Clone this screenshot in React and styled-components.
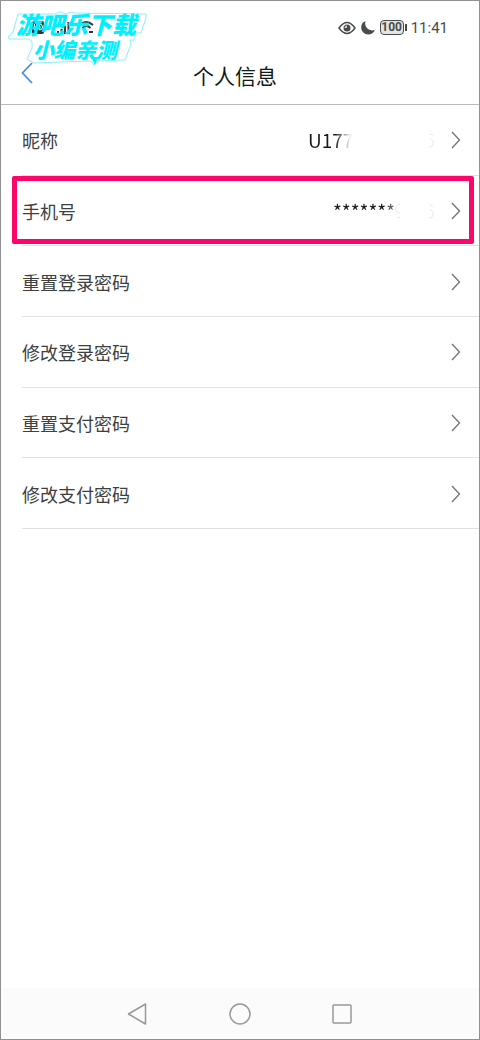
import React from 'react'
import { createGlobalStyle, styled } from 'styled-components'

const rows = [
  { label: '昵称', value: 'U177' },
  { label: '手机号', value: '*******', marked: true },
  { label: '重置登录密码' },
  { label: '修改登录密码' },
  { label: '重置支付密码' },
  { label: '修改支付密码' },
]

export default function App() {
  return (
    <Screen>
      <GlobalStyle />
      <StatusBar>
        <Network viewBox="0 0 64 18" aria-hidden="true">
          <rect x="1" y="2" width="12" height="13" rx="2" fill="#333" />
          <path d="M3.5 5v6M6 5v6M3.5 8h2.500M8.500 5v6q3 0 3-3t-3-3" stroke="#fff" fill="none" />
          <path d="M27 15v-3M30.500 15v-5M34 15V7M37.500 15V3" stroke="#333" strokeWidth="2" />
          <path d="M49 6q6-6 13 0M51.500 9q4-4 8 0" fill="none" stroke="#333" strokeWidth="1.800" />
          <path d="M53 13h3M58 13h4" stroke="#333" strokeWidth="2" />
        </Network>
        <StatusRight>
          <svg width="18" height="14" viewBox="0 0 18 14" fill="none" aria-hidden="true">
            <path d="M1 7Q5 1.500 9 1.500T17 7Q13 12.500 9 12.500T1 7Z" stroke="#484c4a" strokeWidth="1.500" />
            <circle cx="9" cy="7" r="3.500" fill="#484c4a" />
            <path d="M9 7V4.500A2.500 2.500 0 0 0 6.500 7Z" fill="#ccc" />
          </svg>
          <svg width="14" height="14" viewBox="0 0 14 14" aria-hidden="true">
            <path d="M4.500 0C0 1.500-1 7 1.500 10.500 4.500 15 11.500 14.500 14 9 9 11 2.500 6.500 4.500 0Z" fill="#484c4a" />
          </svg>
          <Battery>100</Battery>
          <Clock>11:41</Clock>
        </StatusRight>
      </StatusBar>

      <Header>
        <BackButton aria-label="返回">
          <svg width="12" height="22" viewBox="0 0 12 22" fill="none">
            <path d="M11 1 1.500 11 11 21" stroke="#4a8fdc" strokeWidth="1.800" />
          </svg>
        </BackButton>
        <h1>个人信息</h1>
      </Header>

      <List>
        {rows.map((row) => (
          <Row key={row.label}>
            <RowButton>
              <span>{row.label}</span>
              {row.value && (
                <Value>
                  <Fade $stars={row.marked}>{row.value}</Fade>
                  <Residue viewBox="0 0 44 18" aria-hidden="true">
                    {row.marked && <path d="M8 2Q3 3 4 8T8 10M5 15l3 1" />}
                    <path d="M38 3l3 1M38 8q4 1 3 5t-4 3" />
                  </Residue>
                </Value>
              )}
              <Chevron width="10" height="18" viewBox="0 0 10 18" fill="none" aria-hidden="true">
                <path d="M1 1 8.500 9 1 17" stroke="#777" strokeWidth="1.400" />
              </Chevron>
            </RowButton>
            {row.marked && <Highlight />}
          </Row>
        ))}
      </List>

      <NavBar>
        <button aria-label="返回上一页">
          <svg width="22" height="22" viewBox="0 0 22 22">
            <path d="M18.500 1v20L1.500 11Z" />
          </svg>
        </button>
        <button aria-label="主屏幕">
          <svg width="22" height="22" viewBox="0 0 22 22">
            <circle cx="11" cy="11" r="10" />
          </svg>
        </button>
        <button aria-label="最近任务">
          <svg width="22" height="22" viewBox="0 0 22 22">
            <rect x="2" y="2" width="18" height="18" rx="1" />
          </svg>
        </button>
      </NavBar>

      <Watermark>
        <svg width="144" height="60" viewBox="0 0 144 60" fill="none" aria-hidden="true">
          <path
            d="M11 6 48 6 52 4 55 4 58 6 64 4 67 5 139 6 139 10 134 25 129 25 127 32 123 32 124 36 118 52 91 53 87 57 84 53 27 55 20 51 25 40 25 34 22 31 2 31 1 29 6 24Z"
            stroke="#8eeef5"
          />
          <path d="M84 49 88 57 91 49Z" fill="#00f0ff" />
        </svg>
        <strong>游吧乐下载</strong>
        <em>小编亲测</em>
      </Watermark>
    </Screen>
  )
}

const GlobalStyle = createGlobalStyle`
  * {
    box-sizing: border-box;
  }
  body {
    margin: 0;
    background: #fff;
    font-family: "Noto Sans CJK SC", sans-serif;
  }
  button {
    padding: 0;
    border: 0;
    background: none;
    font: inherit;
    color: inherit;
    cursor: pointer;
  }
  svg {
    display: block;
    flex-shrink: 0;
  }
`;

const Screen = styled.main`
  position: relative;
  display: flex;
  flex-direction: column;
  min-height: 100vh;
  border: 1px solid #919195;
  background: #fff;
`;

const StatusBar = styled.div`
  display: flex;
  justify-content: space-between;
  align-items: center;
  height: 44px;
  padding: 9px 31px 0 30px;
`;

const Network = styled.svg`
  width: 64px;
  height: 18px;
`;

const StatusRight = styled.div`
  display: flex;
  align-items: center;
  gap: 5px;
  color: #484c4a;
`;

const Battery = styled.span`
  position: relative;
  width: 24px;
  height: 15px;
  border: 1px solid #484c4a;
  border-radius: 4px;
  background: #e4e4e4;
  font: 700 12px/13px Roboto, sans-serif;
  text-align: center;

  &::after {
    content: '';
    position: absolute;
    top: 3px;
    right: -4px;
    width: 2px;
    height: 7px;
    background: #484c4a;
  }
`;

const Clock = styled.span`
  padding-left: 2px;
  font: 400 15px/20px Roboto, sans-serif;
`;

const Header = styled.header`
  display: grid;
  grid-template-columns: 48px 1fr 58px;
  align-items: center;
  height: 60px;
  border-bottom: 1px solid #bbb;

  h1 {
    margin: 0;
    color: #111815;
    font-size: 21px;
    font-weight: 400;
    line-height: 30px;
    text-align: center;
  }
`;

const BackButton = styled.button`
  display: flex;
  padding: 0 0 4px 20px;
`;

const List = styled.ul`
  display: grid;
  grid-template-rows: repeat(6, 1fr);
  min-height: 424px;
  margin: 0;
  padding: 0 0 0 21px;
  list-style: none;
`;

const Row = styled.li`
  position: relative;
  display: flex;
  border-bottom: 1px solid #e0e0e0;
`;

const RowButton = styled.button`
  display: flex;
  flex: 1;
  align-items: center;
  padding: 1px 18px 0 0;
  color: #3c403e;
  font-size: 18px;
  line-height: 28px;
`;

const Chevron = styled.svg`
  margin-left: auto;
`;

const Value = styled.span`
  display: flex;
  justify-content: flex-end;
  align-items: center;
  width: 128px;
  margin-left: auto;

  & + ${Chevron} {
    margin-left: 15px;
  }
`;

const Fade = styled.span`
  flex: 1;
  padding-left: ${(props) => (props.$stars ? '25px' : '0')};
  background: linear-gradient(
    90deg,
    #151b19 ${(props) => (props.$stars ? '76px' : '27px')},
    #f0f0f0 ${(props) => (props.$stars ? '96px' : '42px')}
  );
  background-clip: text;
  color: transparent;
  font-size: 19px;
  text-align: left;
  white-space: nowrap;
`;

const Residue = styled.svg`
  width: 44px;
  height: 18px;
  margin-left: -44px;
  fill: none;
  stroke: #e8e8e8;
  stroke-width: 1;
`;

const Highlight = styled.div`
  position: absolute;
  top: 0;
  right: 5px;
  bottom: 1px;
  left: -10px;
  border: 5px solid #fb0769;
  border-radius: 2px;
  pointer-events: none;
`;

const NavBar = styled.nav`
  display: flex;
  justify-content: center;
  align-items: center;
  gap: 80px;
  height: 51px;
  margin-top: auto;
  background: #fbfbfb;

  svg {
    fill: none;
    stroke: #999;
    stroke-width: 1.5;
    stroke-linejoin: round;
  }
`;

const Watermark = styled.div`
  position: absolute;
  top: 7px;
  left: 6px;
  display: flex;
  flex-direction: column;
  width: 144px;
  padding-top: 5px;
  color: #00f0ff;
  font-family: "Liberation Sans", "Noto Sans CJK SC", sans-serif;
  font-style: italic;
  font-weight: 900;
  pointer-events: none;

  svg {
    position: absolute;
    top: 0;
    left: 0;
  }

  strong,
  em {
    position: relative;
    line-height: 25px;
  }

  strong {
    padding-left: 9px;
    font-size: 24px;
    font-weight: 900;
  }

  em {
    padding-left: 26px;
    font-size: 21px;
  }
`;
